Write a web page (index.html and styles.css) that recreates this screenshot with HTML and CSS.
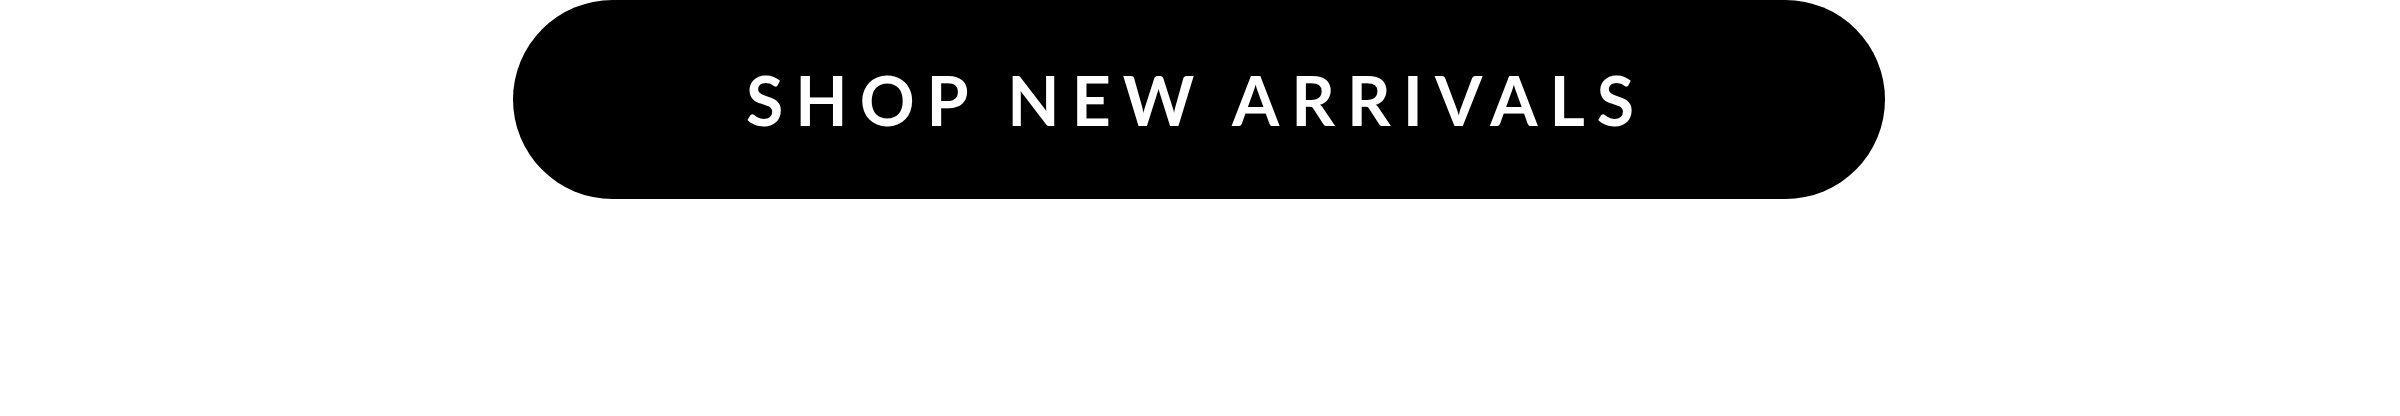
FILE: index.html
```html
<!DOCTYPE html>
<html lang="en">
<head>
  <meta charset="UTF-8">
  <meta name="viewport" content="width=device-width, initial-scale=1.0">
  <title>Shop New Arrivals</title>
  <link rel="stylesheet" href="styles.css">
</head>
<body>
  <div class="cta-wrap">
    <a class="cta-button" href="#"><span class="cta-label">Shop New Arrivals</span></a>
  </div>
</body>
</html>
```

FILE: styles.css
```css
body {
  margin: 0;
  background: #fff;
  font-family: "Lato", "Liberation Sans", Arial, sans-serif;
}
.cta-wrap {
  display: flex;
  justify-content: center;
}
.cta-button {
  display: flex;
  align-items: center;
  justify-content: center;
  flex: 0 0 1372px;
  height: 199px;
  margin-left: -2px;
  background: #000;
  color: #fff;
  border-radius: 100px;
  text-decoration: none;
}
.cta-label {
  text-transform: uppercase;
  font-size: 68px;
  font-weight: 700;
  letter-spacing: 12px;
  margin-right: 6px;
  line-height: 1;
}
```
